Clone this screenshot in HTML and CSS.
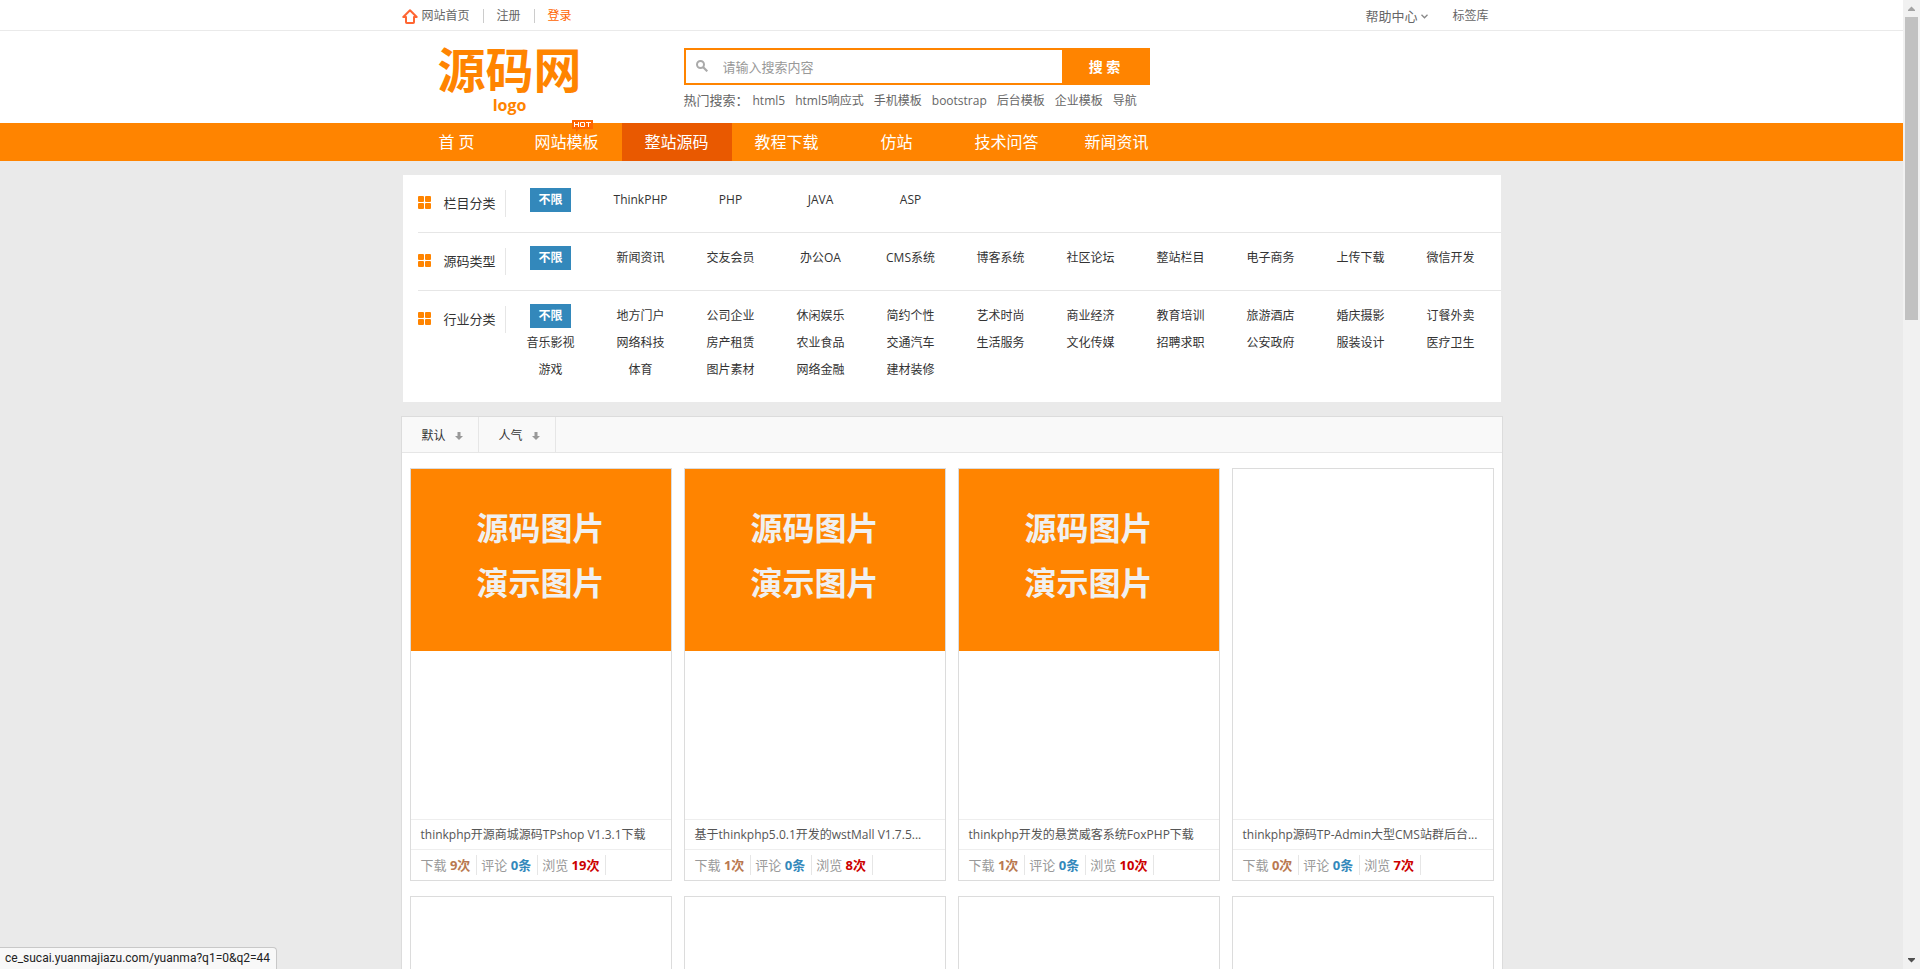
FILE: index.html
```html
<!DOCTYPE html>
<html lang="zh-CN">
<head>
  <meta charset="UTF-8">
  <meta name="viewport" content="width=device-width, initial-scale=1.0">
  <title>整站源码 - 源码网</title>
  <link rel="stylesheet" href="styles.css">
</head>
<body>
  <!-- Shared icons -->
  <svg class="sprite" aria-hidden="true">
    <symbol id="icon-grid" viewBox="0 0 13 13">
      <rect x="0" y="0" width="6" height="6" rx="1"/>
      <rect x="7" y="0" width="6" height="6" rx="1"/>
      <rect x="0" y="7" width="6" height="6" rx="1"/>
      <rect x="7" y="7" width="6" height="6" rx="1"/>
    </symbol>
    <symbol id="icon-down" viewBox="0 0 8 8">
      <path d="M2.500 0h3v4H8L4 8 0 4h2.500z"/>
    </symbol>
  </svg>

  <div class="topbar">
    <div class="wrap topbar-inner">
      <ul class="top-left">
        <li>
          <a href="#">
            <svg class="home-icon" viewBox="0 0 16 15"><path d="M8 1.200L1.300 8H4v5.200Q4 14 4.800 14h6.400q.8 0 .8-.8V8h2.700z" fill="none" stroke="#ff6633" stroke-width="2" stroke-linejoin="round"/></svg>
            网站首页
          </a>
        </li>
        <li><a href="#">注册</a></li>
        <li><a href="#" class="login">登录</a></li>
      </ul>
      <ul class="top-right">
        <li>
          <a href="#" class="help">帮助中心<svg class="chevron" viewBox="0 0 7 5"><path d="M.5.8l3 3 3-3" fill="none" stroke="#888" stroke-width="1.300"/></svg></a>
        </li>
        <li><a href="#">标签库</a></li>
      </ul>
    </div>
  </div>

  <header class="header">
    <div class="wrap header-inner">
      <a href="#" class="logo">
        <span class="logo-name">源码网</span>
        <span class="logo-sub">logo</span>
      </a>
      <div class="search">
        <form class="search-form">
          <label for="keyword" class="search-label" title="搜索">
            <svg viewBox="0 0 12 12"><circle cx="4.500" cy="4.500" r="3.500" fill="none" stroke="#aaa" stroke-width="2"/><path d="M7 7l4.300 4.300" stroke="#aaa" stroke-width="2.200"/></svg>
          </label>
          <input type="text" id="keyword" name="keyword" placeholder="请输入搜索内容">
          <button type="submit">搜 索</button>
        </form>
        <div class="hot-words">
          <span class="hot-title">热门搜索：</span>
          <a href="#">html5</a>
          <a href="#">html5响应式</a>
          <a href="#">手机模板</a>
          <a href="#">bootstrap</a>
          <a href="#">后台模板</a>
          <a href="#">企业模板</a>
          <a href="#">导航</a>
        </div>
      </div>
    </div>
  </header>

  <nav class="nav">
    <ul class="wrap nav-list">
      <li><a href="#">首 页</a></li>
      <li>
        <a href="#">网站模板</a>
        <svg class="hot-badge" viewBox="0 0 21 12">
          <path d="M0 0h21v9H7l-3 3V9H0z" fill="#ff6600"/>
          <path d="M2.500 2v5M6.500 2v5M2.500 4.500h4M8.500 2.500h4v4h-4zM14 2.500h5M16.500 2.500V7" fill="none" stroke="#fff"/>
        </svg>
      </li>
      <li><a href="#" class="active">整站源码</a></li>
      <li><a href="#">教程下载</a></li>
      <li><a href="#">仿站</a></li>
      <li><a href="#">技术问答</a></li>
      <li><a href="#">新闻资讯</a></li>
    </ul>
  </nav>

  <main class="wrap">
    <!-- Filters -->
    <section class="filter">
      <div class="filter-row">
        <h2><svg><use href="#icon-grid"/></svg>栏目分类</h2>
        <ul>
          <li><a href="#" class="on">不限</a></li>
          <li><a href="#">ThinkPHP</a></li>
          <li><a href="#">PHP</a></li>
          <li><a href="#">JAVA</a></li>
          <li><a href="#">ASP</a></li>
        </ul>
      </div>
      <div class="filter-row">
        <h2><svg><use href="#icon-grid"/></svg>源码类型</h2>
        <ul>
          <li><a href="#" class="on">不限</a></li>
          <li><a href="#">新闻资讯</a></li>
          <li><a href="#">交友会员</a></li>
          <li><a href="#">办公OA</a></li>
          <li><a href="#">CMS系统</a></li>
          <li><a href="#">博客系统</a></li>
          <li><a href="#">社区论坛</a></li>
          <li><a href="#">整站栏目</a></li>
          <li><a href="#">电子商务</a></li>
          <li><a href="#">上传下载</a></li>
          <li><a href="#">微信开发</a></li>
        </ul>
      </div>
      <div class="filter-row">
        <h2><svg><use href="#icon-grid"/></svg>行业分类</h2>
        <ul>
          <li><a href="#" class="on">不限</a></li>
          <li><a href="#">地方门户</a></li>
          <li><a href="#">公司企业</a></li>
          <li><a href="#">休闲娱乐</a></li>
          <li><a href="#">简约个性</a></li>
          <li><a href="#">艺术时尚</a></li>
          <li><a href="#">商业经济</a></li>
          <li><a href="#">教育培训</a></li>
          <li><a href="#">旅游酒店</a></li>
          <li><a href="#">婚庆摄影</a></li>
          <li><a href="#">订餐外卖</a></li>
          <li><a href="#">音乐影视</a></li>
          <li><a href="#">网络科技</a></li>
          <li><a href="#">房产租赁</a></li>
          <li><a href="#">农业食品</a></li>
          <li><a href="#">交通汽车</a></li>
          <li><a href="#">生活服务</a></li>
          <li><a href="#">文化传媒</a></li>
          <li><a href="#">招聘求职</a></li>
          <li><a href="#">公安政府</a></li>
          <li><a href="#">服装设计</a></li>
          <li><a href="#">医疗卫生</a></li>
          <li><a href="#">游戏</a></li>
          <li><a href="#">体育</a></li>
          <li><a href="#">图片素材</a></li>
          <li><a href="#">网络金融</a></li>
          <li><a href="#">建材装修</a></li>
        </ul>
      </div>
    </section>

    <!-- Source list -->
    <section class="list">
      <div class="sort">
        <a href="#">默认<svg><use href="#icon-down"/></svg></a>
        <a href="#">人气<svg><use href="#icon-down"/></svg></a>
      </div>
      <div class="cards">
        <article class="card">
          <a href="#" class="thumb"><span class="cover">源码图片<br>演示图片</span></a>
          <h3><a href="#">thinkphp开源商城源码TPshop V1.3.1下载</a></h3>
          <p class="meta">
            <span>下载 <b class="down">9次</b></span>
            <span>评论 <b class="comment">0条</b></span>
            <span>浏览 <b class="view">19次</b></span>
          </p>
        </article>
        <article class="card">
          <a href="#" class="thumb"><span class="cover">源码图片<br>演示图片</span></a>
          <h3><a href="#">基于thinkphp5.0.1开发的wstMall V1.7.5...</a></h3>
          <p class="meta">
            <span>下载 <b class="down">1次</b></span>
            <span>评论 <b class="comment">0条</b></span>
            <span>浏览 <b class="view">8次</b></span>
          </p>
        </article>
        <article class="card">
          <a href="#" class="thumb"><span class="cover">源码图片<br>演示图片</span></a>
          <h3><a href="#">thinkphp开发的悬赏威客系统FoxPHP下载</a></h3>
          <p class="meta">
            <span>下载 <b class="down">1次</b></span>
            <span>评论 <b class="comment">0条</b></span>
            <span>浏览 <b class="view">10次</b></span>
          </p>
        </article>
        <article class="card">
          <a href="#" class="thumb"></a>
          <h3><a href="#">thinkphp源码TP-Admin大型CMS站群后台...</a></h3>
          <p class="meta">
            <span>下载 <b class="down">0次</b></span>
            <span>评论 <b class="comment">0条</b></span>
            <span>浏览 <b class="view">7次</b></span>
          </p>
        </article>
        <article class="card"><a href="#" class="thumb"></a></article>
        <article class="card"><a href="#" class="thumb"></a></article>
        <article class="card"><a href="#" class="thumb"></a></article>
        <article class="card"><a href="#" class="thumb"></a></article>
      </div>
    </section>
  </main>

  <div class="status">ce_sucai.yuanmajiazu.com/yuanma?q1=0&amp;q2=44</div>

  <div class="scrollbar" aria-hidden="true">
    <svg viewBox="0 0 17 17"><path d="M5 11v-1l3.500-3.500L12 10v1z" fill="#a3a3a3"/></svg>
    <div class="scroll-thumb"></div>
    <svg viewBox="0 0 17 17"><path d="M5 6v1l3.500 3.500L12 7V6z" fill="#505050"/></svg>
  </div>
</body>
</html>
```
FILE: styles.css
```css
* {
  box-sizing: border-box;
}
html, body {
  height: 100%;
}
body {
  margin: 0;
  padding-right: 17px; /* room for the scrollbar */
  overflow: hidden;
  background-color: #eaeaea;
  font: 12px/24px "Open Sans", "Noto Sans CJK SC", sans-serif;
  color: #333;
}
ul, h2, h3, p {
  margin: 0;
  padding: 0;
  list-style: none;
  font-weight: normal;
}
a {
  color: inherit;
  text-decoration: none;
}
.sprite {
  position: absolute;
  width: 0;
  height: 0;
}
.wrap {
  max-width: 1100px;
  margin: 0 auto;
}

/* Top bar */
.topbar {
  background-color: #fff;
  border-bottom: 1px solid #eaeaea;
  color: #666;
}
.topbar-inner {
  display: flex;
  justify-content: space-between;
  padding: 4px 13px 2px 0;
}
.topbar ul,
.topbar li,
.topbar a {
  display: flex;
  align-items: center;
}
.top-left li + li::before {
  content: "";
  height: 14px;
  margin: 0 13px;
  border-left: 1px solid #ccc;
}
.home-icon {
  width: 16px;
  height: 15px;
  margin-right: 4px;
}
.login {
  color: #ff6600;
}
.top-right {
  gap: 24px;
}
.help {
  font-size: 13px;
}
.chevron {
  width: 7px;
  height: 5px;
  margin-left: 4px;
}

/* Logo and search */
.header {
  background-color: #fff;
}
.header-inner {
  display: flex;
  height: 92px;
}
.logo {
  display: flex;
  flex-direction: column;
  align-items: center;
  width: 282px;
  padding: 16px 66px 0 0;
  font-weight: bold;
  color: #ff8400;
}
.logo-name {
  font-family: "Liberation Sans", "Noto Sans CJK SC", sans-serif;
  font-size: 48px;
  line-height: 50px;
  white-space: nowrap;
}
.logo-sub {
  font-size: 16px;
  line-height: 16px;
}
.search {
  padding-top: 17px;
}
.search-form {
  display: flex;
  width: 466px;
  height: 37px;
  border: 2px solid #ff8400;
}
.search-label {
  padding: 10px;
  line-height: 12px;
}
.search-label svg {
  width: 12px;
  height: 12px;
}
.search-form input {
  flex: 1;
  min-width: 0;
  padding: 0 5px;
  border: none;
  outline: none;
  font: inherit;
  font-size: 13px;
}
.search-form input::placeholder {
  color: #999;
}
.search-form button {
  width: 86px;
  padding: 0;
  border: none;
  background-color: #ff8400;
  font: inherit;
  font-size: 14px;
  font-weight: bold;
  color: #fff;
  cursor: pointer;
}
.hot-words {
  display: flex;
  gap: 10px;
  padding-top: 4px;
  color: #666;
}
.hot-title {
  width: 59px;
  font-size: 13px;
  line-height: 22px;
  white-space: nowrap;
}

/* Navigation */
.nav {
  background-color: #ff8400;
}
.nav-list {
  display: flex;
}
.nav-list li {
  position: relative;
  width: 110px;
}
.nav-list a {
  display: block;
  font-size: 16px;
  line-height: 38px;
  text-align: center;
  color: #fff;
}
.nav-list a.active,
.nav-list a:hover {
  background-color: #e95900;
}
.hot-badge {
  position: absolute;
  top: -3px;
  left: 60px;
  width: 21px;
  height: 12px;
}

/* Filters */
.filter {
  margin: 14px 1px;
  padding-left: 15px;
  background-color: #fff;
}
.filter-row {
  display: flex;
  align-items: flex-start;
  padding: 13px 0 15px;
}
.filter-row + .filter-row {
  border-top: 1px solid #e6e6e6;
}
.filter-row:last-child {
  padding-bottom: 17px;
}
.filter h2 {
  display: flex;
  align-items: center;
  width: 88px;
  height: 27px;
  margin-top: 2px;
  padding-bottom: 2px;
  border-right: 1px solid #e6e6e6;
  font-size: 13px;
}
.filter h2 svg {
  width: 13px;
  height: 13px;
  margin-right: 13px;
  fill: #ff8400;
}
.filter ul {
  display: grid;
  flex: 1;
  grid-template-columns: repeat(11, 90px);
  grid-auto-rows: 27px;
}
.filter li {
  display: flex;
  align-items: flex-start;
  justify-content: center;
}
.filter li a {
  padding: 0 8px;
}
.filter li a.on {
  background-color: #3388bb;
  font-weight: bold;
  color: #fff;
}

/* Source list */
.list {
  margin: 0 -1px;
  border: 1px solid #dcdcdc;
  background-color: #fff;
}
.sort {
  display: flex;
  border-bottom: 1px solid #e6e6e6;
  background-color: #f9f9f9;
}
.sort a {
  display: flex;
  align-items: center;
  gap: 9px;
  width: 77px;
  height: 35px;
  padding: 2px 0 0 20px;
  border-right: 1px solid #e6e6e6;
}
.sort svg {
  width: 8px;
  height: 8px;
  fill: #999;
}
.cards {
  display: grid;
  grid-template-columns: repeat(4, 1fr);
  gap: 15px 12px;
  padding: 15px 8px;
}
.card {
  min-width: 0;
  border: 1px solid #dcdcdc;
}
.thumb {
  display: block;
  height: 350px;
}
.cover {
  display: block;
  height: 182px;
  padding-top: 31px;
  background-color: #ff8400;
  font-size: 32px;
  font-weight: bold;
  line-height: 55px;
  text-align: center;
  color: #f0f0f0;
}
.card h3 {
  height: 30px;
  padding: 0 10px;
  border-top: 1px solid #eee;
  overflow: hidden;
  font-size: 12px;
  line-height: 30px;
  white-space: nowrap;
  color: #555;
}
.meta {
  display: flex;
  gap: 4px;
  padding: 5px 10px;
  border-top: 1px solid #eee;
  font-size: 13px;
  line-height: 20px;
  color: #999;
}
.meta span {
  padding-right: 6px;
  border-right: 1px solid #e6e6e6;
}
.down {
  color: #b97850;
}
.comment {
  color: #3388bb;
}
.view {
  color: #c00;
}

/* Link status bubble */
.status {
  position: fixed;
  left: 0;
  bottom: 0;
  padding: 0 6px 0 5px;
  border: 1px solid #c8c8c8;
  border-width: 1px 1px 0 0;
  border-top-right-radius: 4px;
  background-color: #f8f8f8;
  font-family: Roboto, sans-serif;
  line-height: 21px;
  color: #222;
}

/* Scrollbar */
.scrollbar {
  position: fixed;
  top: 0;
  right: 0;
  bottom: 0;
  display: flex;
  flex-direction: column;
  align-items: center;
  width: 17px;
  background-color: #f1f1f1;
}
.scrollbar svg {
  width: 17px;
  height: 17px;
}
.scrollbar svg:last-child {
  margin-top: auto;
}
.scroll-thumb {
  width: 13px;
  height: 303px;
  background-color: #c1c1c1;
}
```
